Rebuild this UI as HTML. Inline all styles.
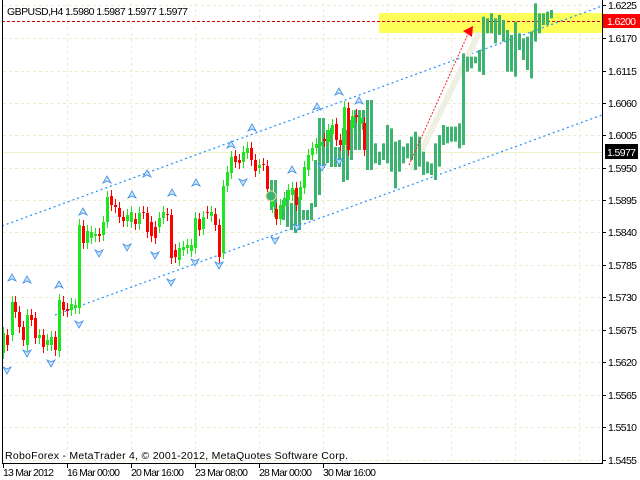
<!DOCTYPE html><html><head><meta charset="utf-8"><style>
html,body{margin:0;padding:0;background:#fff;width:640px;height:480px;overflow:hidden}
svg{display:block}
text{font-family:"Liberation Sans",sans-serif;font-size:10.5px;fill:#000}
</style></head><body>
<svg id="s" width="640" height="480" xmlns="http://www.w3.org/2000/svg">
<g id="grid" stroke="#ececd0" stroke-width="1" stroke-dasharray="3,3"></g>
<line x1="2" y1="152.5" x2="602" y2="152.5" stroke="#f0f0c8"/>
<rect x="379" y="13" width="223" height="20" fill="#ffff3c" opacity="0.85"/>
<line x1="2" y1="21.5" x2="602" y2="21.5" stroke="#d40000" stroke-dasharray="3,2"/>
<line x1="2" y1="226" x2="602" y2="6" stroke="#1e90ff" stroke-width="1.2" stroke-dasharray="2,3"/>
<line x1="55" y1="315" x2="602" y2="115" stroke="#1e90ff" stroke-width="1.2" stroke-dasharray="2,3"/>
<line x1="413" y1="168" x2="478" y2="35" stroke="#efefe2" stroke-width="6" stroke-linecap="round"/>
<g id="dk" fill="#3cb371"></g>
<g id="cd"></g>
<circle cx="271" cy="196" r="5" fill="#3cb371" stroke="#e8d890" stroke-width="1"/>
<g id="ar"></g>
<line x1="409" y1="165" x2="468" y2="34" stroke="#ff2020" stroke-width="1" stroke-dasharray="2,1.5"/>
<polygon points="463,31 473,26 472,37" fill="#ff0000"/>
<line x1="2.5" y1="0" x2="2.5" y2="463" stroke="#000"/>
<line x1="602.5" y1="0" x2="602.5" y2="463" stroke="#000"/>
<line x1="2" y1="463.5" x2="603" y2="463.5" stroke="#000"/>
<g id="ax"></g>
<rect x="603" y="14" width="37" height="14" fill="#ff0000"/>
<text x="607" y="25" textLength="29" style="fill:#fff">1.6200</text>
<rect x="605" y="144" width="33" height="15" fill="#000"/>
<text x="607" y="156" textLength="29" style="fill:#fff">1.5977</text>
<text x="7" y="15" textLength="181">GBPUSD,H4  1.5980 1.5987 1.5977 1.5977</text>
<text x="5" y="459" textLength="343">RoboForex - MetaTrader 4, © 2001-2012, MetaQuotes Software Corp.</text>
<text x="3" y="476" textLength="51">13 Mar 2012</text>
<text x="67" y="476" textLength="53">16 Mar 00:00</text>
<text x="131" y="476" textLength="53">20 Mar 16:00</text>
<text x="195" y="476" textLength="53">23 Mar 08:00</text>
<text x="259" y="476" textLength="53">28 Mar 00:00</text>
<text x="323" y="476" textLength="53">30 Mar 16:00</text>
</svg>
<script>
var NS="http://www.w3.org/2000/svg";
function el(p,t,a){var e=document.createElementNS(NS,t);for(var k in a)e.setAttribute(k,a[k]);document.getElementById(p).appendChild(e);return e;}
var prices=["1.6225","1.6170","1.6115","1.6060","1.6005","1.5950","1.5895","1.5840","1.5785","1.5730","1.5675","1.5620","1.5565","1.5510","1.5455"];
var ys=[5,38,71,103,135,168,200,232,265,297,330,362,395,427,460];
for(var i=0;i<ys.length;i++){
 el("grid","line",{x1:3,y1:ys[i]+.5,x2:602,y2:ys[i]+.5});
 el("ax","line",{x1:602,y1:ys[i]+.5,x2:606,y2:ys[i]+.5,stroke:"#000"});
 var t=el("ax","text",{x:608,y:ys[i]+4,textLength:29});t.textContent=prices[i];
}
for(var x=67;x<602;x+=64){el("grid","line",{x1:x+.5,y1:3,x2:x+.5,y2:463});}
[3,67,131,195,259,323].forEach(function(x){el("ax","line",{x1:x+.5,y1:463,x2:x+.5,y2:468,stroke:"#000"});});
var C=[[3,333,353,'g'],[7,335,345,'r'],[12,302,335,'g'],[15,302,312,'r'],[19,312,327,'r'],[23,327,340,'r'],[27,315,345,'g'],[31,315,320,'r'],[35,318,338,'r'],[39,335,338,'g'],[43,335,347,'r'],[47,340,345,'g'],[51,337,345,'g'],[55,337,350,'r'],[59,300,351,'g'],[63,302,310,'r'],[67,309,311,'r'],[71,304,310,'g'],[75,305,308,'g'],[79,225,308,'g'],[83,226,243,'r'],[87,231,243,'g'],[91,232,238,'g'],[95,234,236,'g'],[99,234,236,'r'],[103,222,235,'g'],[107,197,222,'g'],[111,196,205,'r'],[115,205,207,'r'],[119,208,217,'r'],[123,217,221,'r'],[127,215,221,'g'],[131,212,222,'g'],[135,219,224,'r'],[139,213,224,'g'],[143,212,213,'r'],[147,213,232,'r'],[151,222,236,'r'],[155,227,238,'r'],[159,218,227,'g'],[163,212,218,'g'],[167,214,215,'r'],[171,215,258,'r'],[175,250,257,'r'],[179,248,260,'g'],[183,247,250,'g'],[187,245,248,'g'],[191,245,251,'g'],[195,218,248,'g'],[199,219,230,'r'],[203,217,229,'g'],[207,212,213,'r'],[211,212,216,'g'],[215,214,225,'r'],[219,225,257,'r'],[223,186,253,'g'],[227,172,186,'g'],[231,157,173,'g'],[235,156,162,'r'],[239,160,163,'r'],[243,152,162,'g'],[247,148,153,'g'],[251,148,160,'r'],[255,160,171,'r'],[259,165,168,'g'],[263,164,165,'r'],[267,166,189,'r'],[272,197,207,'g'],[276,209,219,'r'],[280,205,219,'g'],[284,198,206,'g'],[288,190,200,'g'],[292,188,195,'g'],[296,188,205,'r'],[300,187,200,'g'],[304,167,188,'g'],[308,155,170,'g'],[312,148,155,'g'],[316,144,148,'g'],[320,142,146,'g'],[324,139,141,'r'],[328,130,142,'g'],[332,125,134,'g'],[336,124,140,'r'],[340,140,145,'r'],[344,107,145,'g'],[348,108,150,'r'],[352,116,128,'g'],[356,115,117,'r'],[360,118,124,'g'],[364,123,150,'r']];
C.forEach(function(c){var col=c[3]=='g'?'#1ee61e':'#ff0000';
 el("cd","line",{x1:c[0]+.5,y1:c[1]-6,x2:c[0]+.5,y2:c[2]+6,stroke:col});
 el("cd","rect",{x:c[0]-1,y:c[1],width:3,height:Math.max(1,c[2]-c[1]),fill:col});});
var D=[[271,180,210],[275,180,217],[283,200,220],[287,190,227],[291,203,230],[295,190,233],[299,197,230],[303,210,220],[307,210,220],[311,203,220],[315,160,207],[319,118,195],[323,118,168],[327,130,163],[331,128,167],[335,147,167],[339,147,167],[343,128,182],[347,130,180],[351,120,160],[355,110,150],[359,110,150],[363,110,130],[367,113,163],[371,100,170]];
var Z=[[140,300,510],[152,372,510],[165,430,490],[177,455,495],[189,430,480],[201,375,490],[213,385,515],[225,425,565],[237,420,515],[249,440,490],[261,430,475],[273,410,480],[285,395,510],[297,410,500],[309,455,525],[321,485,520],[333,490,525],[345,430,540],[357,405,500],[369,375,435],[381,380,430],[393,380,425],[405,380,425],[417,370,445],[429,160,435],[441,170,215],[453,170,205],[465,170,190],[477,150,215],[489,50,225],[501,55,100],[513,40,100],[525,55,130],[537,45,105],[549,60,125],[561,90,215],[573,105,215],[585,65,230],[597,100,150],[609,115,180],[621,110,210],[633,95,235],[645,10,125],[657,40,100],[669,40,75],[681,35,75],[693,30,55]];
Z.forEach(function(z){D.push([Math.round(320+z[0]/3),z[1]/3,z[2]/3]);});
D.forEach(function(d){el("dk","rect",{x:d[0]-1,y:d[1],width:3,height:d[2]-d[1]});});
var U=[[12,278],[27,280],[59,285],[83,212],[107,180],[132,195],[147,174],[172,193],[196,183],[231,145],[252,128],[292,170],[317,107],[339,92],[359,101]];
var W=[[7,370],[27,353],[51,363],[79,324],[99,253],[127,247],[155,255],[171,282],[195,262],[219,265],[243,182],[275,240],[297,227],[322,167],[339,161]];
U.forEach(function(a){el("ar","polygon",{points:(a[0])+","+(a[1]-4)+" "+(a[0]+4)+","+(a[1]+3)+" "+a[0]+","+(a[1]+1)+" "+(a[0]-4)+","+(a[1]+3),fill:"#cfe4fb",stroke:"#3a8ee8","stroke-width":"0.8"});});
W.forEach(function(a){el("ar","polygon",{points:(a[0])+","+(a[1]+4)+" "+(a[0]+4)+","+(a[1]-3)+" "+a[0]+","+(a[1]-1)+" "+(a[0]-4)+","+(a[1]-3),fill:"#cfe4fb",stroke:"#3a8ee8","stroke-width":"0.8"});});
</script>
</body></html>
